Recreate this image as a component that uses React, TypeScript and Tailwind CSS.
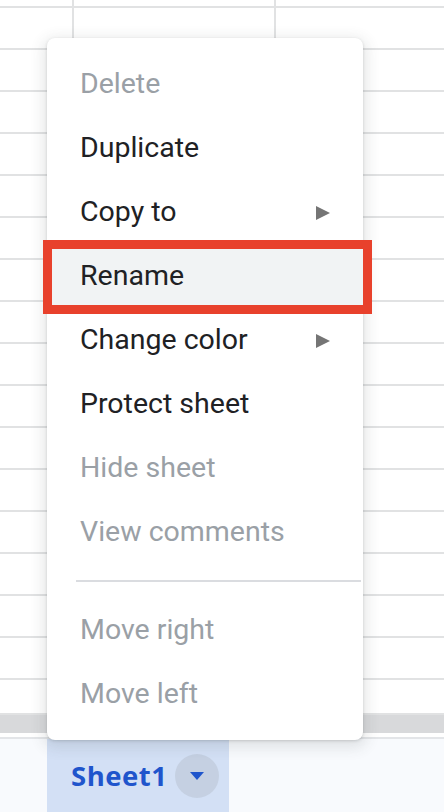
import { Fragment } from "react";

const items = [
  { label: "Delete", disabled: true },
  { label: "Duplicate" },
  { label: "Copy to", sub: true },
  { label: "Rename", active: true },
  { label: "Change color", sub: true },
  { label: "Protect sheet" },
  { label: "Hide sheet", disabled: true },
  { label: "View comments", disabled: true },
  { divider: true },
  { label: "Move right", disabled: true },
  { label: "Move left", disabled: true },
];

function GridRow({ h }: { h: string }) {
  return (
    <div className={`flex shrink-0 border-b-2 border-[#e1e2e3] ${h}`}>
      <div className="w-[74px] border-r-2 border-[#e1e2e3]" />
      <div className="w-[202px] border-r-2 border-[#e1e2e3]" />
      <div className="flex-1" />
    </div>
  );
}

export default function App() {
  const rows = Array.from({ length: 17 });
  return (
    <div
      className="relative w-[444px] h-[812px] overflow-hidden bg-white flex flex-col"
      style={{ fontFamily: "Roboto, 'Liberation Sans', sans-serif" }}
    >
      {/* Grid */}
      <div className="h-[713px] shrink-0 overflow-hidden flex flex-col">
        <GridRow h="h-[8px]" />
        {rows.map((_, i) => (
          <GridRow key={i} h="h-[42px]" />
        ))}
      </div>
      <div className="h-[2px] shrink-0 bg-[#e1e2e3]" />
      <div className="h-[18px] shrink-0 bg-[#d8d9db]" />
      <div className="h-[4px] shrink-0 bg-white" />
      <div className="h-[2px] shrink-0 bg-[#e3e5e8]" />

      {/* Sheet bar */}
      <div className="flex-1 bg-[#f8fafd] pl-[47px]">
        <div className="h-full w-[182px] bg-[#d3e0f5] flex items-center pl-[24px] pr-[10px] justify-between">
          <span
            className="text-[27.5px] font-bold text-[#1f55cc] tracking-[0.5px]"
            style={{ fontFamily: "'Open Sans', Roboto, sans-serif" }}
          >
            Sheet1
          </span>
          <div className="w-[44px] h-[44px] rounded-full bg-[#c5d0e2] flex items-center justify-center">
            <svg width="14" height="8" viewBox="0 0 14 8">
              <path d="M0 0h14L7 8z" fill="#1f55cc" />
            </svg>
          </div>
        </div>
      </div>

      {/* Context menu */}
      <div className="absolute left-[47px] top-[38px] w-[316px] h-[702px] bg-white rounded-[8px] py-[14px] shadow-[0_4px_14px_4px_rgba(60,64,67,0.12),0_1px_3px_rgba(60,64,67,0.2)]">
        {items.map((it, i) =>
          it.divider ? (
            <div key={i} className="h-[34px] flex items-center pl-[29px] pr-[2px]">
              <div className="h-[2px] w-full bg-[#dadce0]" />
            </div>
          ) : (
            <Fragment key={i}>
              <div
                className={`h-[64px] flex items-center justify-between pl-[33px] pr-[33px] pt-[1px] text-[28.5px] ${
                  it.disabled ? "text-[#9aa0a6]" : "text-[#202124]"
                } ${it.active ? "bg-[#f1f3f4]" : ""}`}
              >
                <span>{it.label}</span>
                {it.sub && (
                  <svg width="14" height="14" viewBox="0 0 14 14">
                    <path d="M0 0L14 7L0 14z" fill="#757575" />
                  </svg>
                )}
              </div>
            </Fragment>
          )
        )}
      </div>

      {/* Highlight box */}
      <div className="absolute left-[43px] top-[240px] w-[329px] h-[74px] border-[9px] border-[#e8412c]" />
    </div>
  );
}
